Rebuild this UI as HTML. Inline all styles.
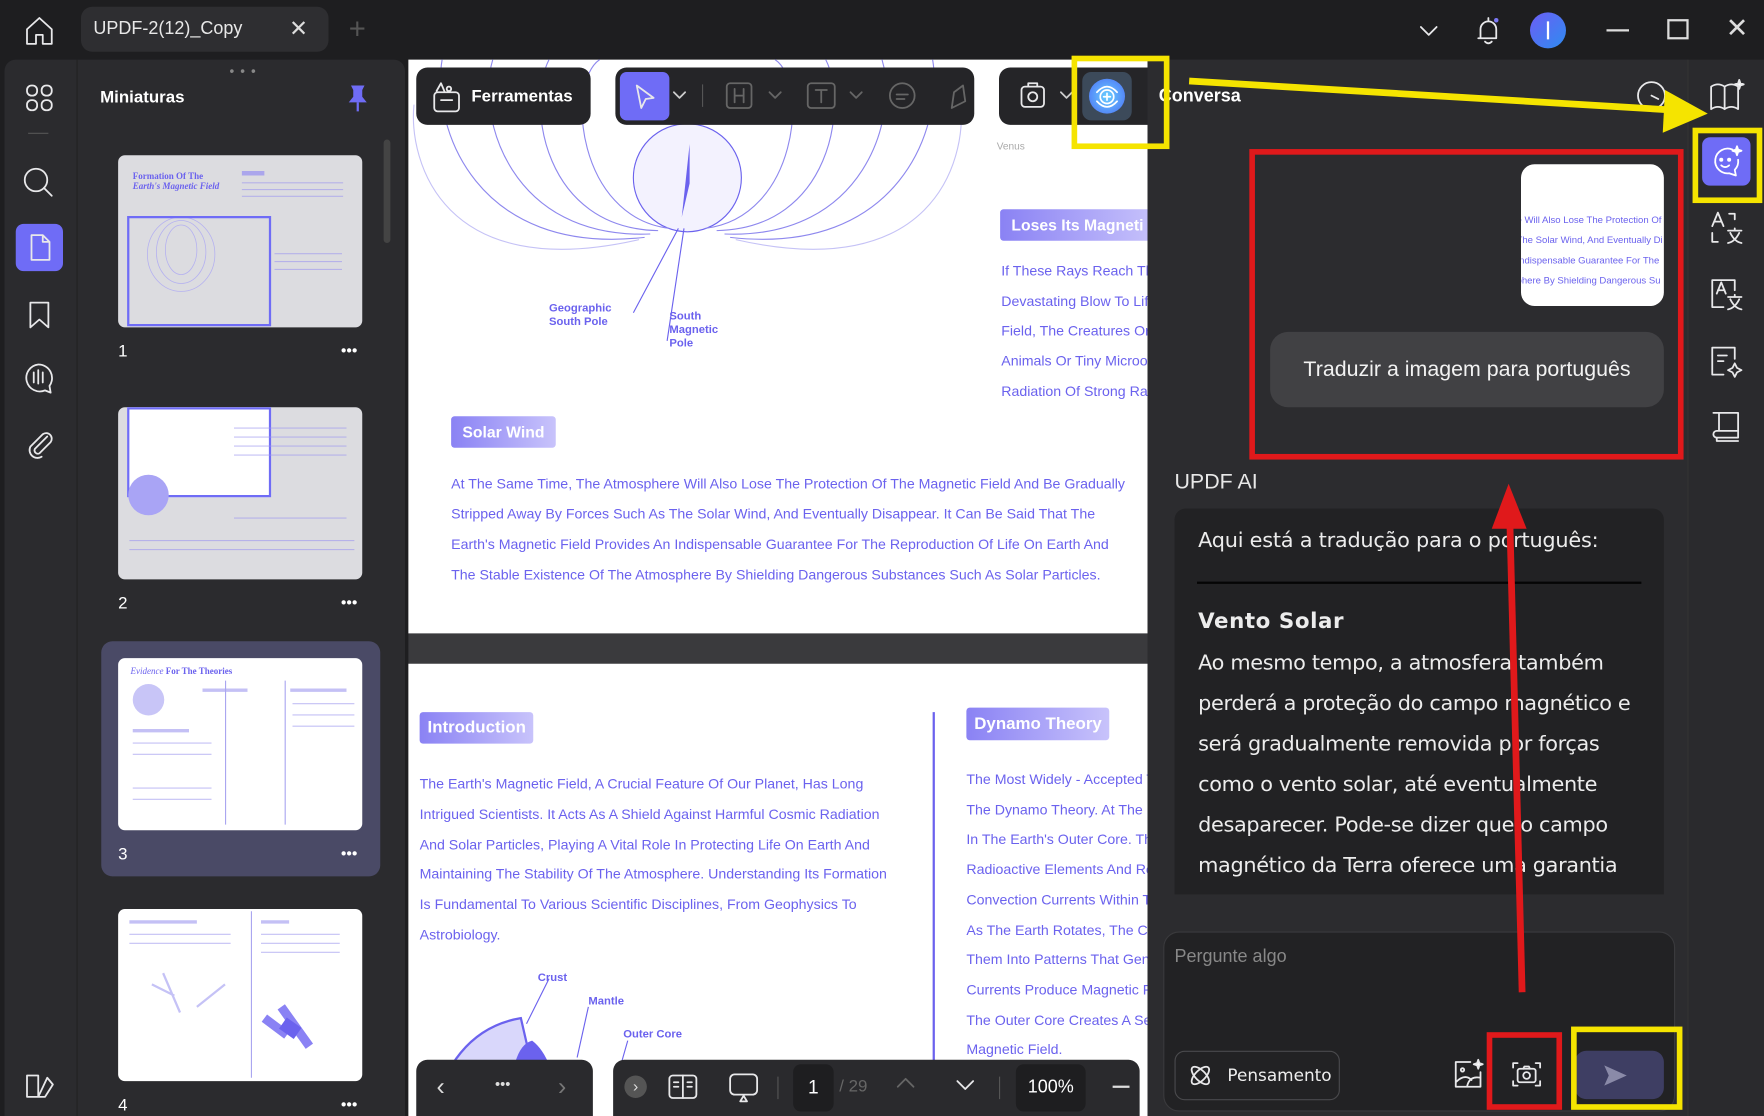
<!DOCTYPE html>
<html><head><meta charset="utf-8"><style>
*{margin:0;padding:0;box-sizing:border-box}
html,body{width:1764px;height:1116px;overflow:hidden;background:#1e1e20;font-family:"Liberation Sans",sans-serif}
#s{position:absolute;left:0;top:0;width:1568px;height:992px;transform:scale(1.125);transform-origin:0 0;background:#1e1e20;overflow:hidden}
.a{position:absolute}
.w{color:#fff}
.doc{color:#6b62ee;font-size:12.6px;white-space:nowrap;font-family:"Liberation Sans",sans-serif}
.badge{position:absolute;color:#fff;font-weight:bold;background:linear-gradient(90deg,#8a82f4,#c8c3fb);border-radius:3px;padding:0 10px}
.thumb{position:absolute;border-radius:6px}
.ln{position:absolute;height:2px;background:#9c96ef;opacity:.6}
.ic{position:absolute;fill:none;stroke:#e8e8ea;stroke-width:1.6;stroke-linecap:round;stroke-linejoin:round}
</style></head><body><div id="s">

<svg class="ic" style="left:20px;top:12px" width="30" height="30" viewBox="0 0 30 30"><path d="M4 14 L15 4 L26 14 V27 H18 V19 H12 V27 H4 Z"/></svg>
<div class="a" style="left:72px;top:6px;width:220px;height:40px;background:#2e2e31;border-radius:10px"></div>
<div class="a w" style="left:83px;top:17px;font-size:16px;color:#e8e8e8">UPDF-2(12)_Copy</div>
<div class="a" style="left:257px;top:13px;font-size:20px;color:#ddd">✕</div>
<div class="a" style="left:310px;top:10px;font-size:26px;color:#555">+</div>
<svg class="ic" style="left:1258px;top:18px" width="24" height="20"><path d="M5 6 L12 13 L19 6"/></svg>
<svg class="ic" style="left:1308px;top:12px" width="30" height="30" viewBox="0 0 30 30"><path d="M8 22 V14 A7 7 0 0 1 22 14 V22 H6 M12 25 Q15 28 18 25 M15 4 V6"/><circle cx="22" cy="6" r="2" fill="#7b78f5" stroke="none"/></svg>
<div class="a" style="left:1360px;top:11px;width:32px;height:32px;border-radius:50%;background:linear-gradient(135deg,#6c5df5,#2e8cf0)"><div style="position:absolute;left:15px;top:8px;width:2px;height:16px;background:#fff"></div></div>
<div class="a" style="left:1428px;top:26px;width:20px;height:2px;background:#ddd"></div>
<div class="a" style="left:1482px;top:17px;width:19px;height:18px;border:2px solid #ddd"></div>
<div class="a" style="left:1534px;top:11px;font-size:24px;color:#ddd">✕</div>

<div class="a" style="left:4px;top:53px;width:356px;height:939px;background:#2b2b2e;border-radius:10px 10px 0 0"></div>
<div class="a" style="left:68px;top:53px;width:1px;height:939px;background:#222"></div>
<svg class="ic" style="left:20px;top:72px" width="30" height="30" viewBox="0 0 30 30"><rect x="4" y="4" width="9" height="9" rx="4"/><rect x="17" y="4" width="9" height="9" rx="4"/><rect x="4" y="17" width="9" height="9" rx="4"/><rect x="17" y="17" width="9" height="9" rx="4"/></svg>
<div class="a" style="left:25px;top:118px;width:18px;height:1px;background:#555"></div>
<svg class="ic" style="left:18px;top:146px" width="32" height="32" viewBox="0 0 32 32"><circle cx="14" cy="14" r="10"/><path d="M21 21 L28 28"/></svg>
<div class="a" style="left:14px;top:199px;width:42px;height:42px;background:#6f6cf6;border-radius:7px"></div>
<svg class="ic" style="left:20px;top:205px" width="30" height="30" viewBox="0 0 30 30"><path d="M8 4 H18 L24 10 V26 H8 Z M18 4 V10 H24"/></svg>
<svg class="ic" style="left:20px;top:265px" width="30" height="30" viewBox="0 0 30 30"><path d="M7 4 H23 V26 L15 19 L7 26 Z"/></svg>
<svg class="ic" style="left:18px;top:320px" width="32" height="32" viewBox="0 0 32 32"><path d="M16 4 A12 12 0 1 0 22 27 L27 29 L26 23 A12 12 0 0 0 16 4 Z M12 11 V20 M16 9 V21 M20 11 V20"/></svg>
<svg class="ic" style="left:20px;top:380px" width="30" height="30" viewBox="0 0 30 30"><path d="M22 8 L11 19 A3 3 0 0 0 15 23 L25 13 A5 5 0 0 0 18 6 L7 17 A7 7 0 0 0 17 26"/></svg>
<svg class="ic" style="left:20px;top:950px" width="30" height="30" viewBox="0 0 30 30"><path d="M4 6 H14 V25 H4 Z M14 25 L22 8 L27 14 L20 25 Z"/></svg>

<div class="a" style="left:204px;top:56px;color:#888;font-size:12px;letter-spacing:1px">• • •</div>
<div class="a w" style="left:89px;top:78px;font-size:15px;font-weight:bold">Miniaturas</div>
<svg class="a" style="left:308px;top:74px" width="20" height="26"><path d="M4 2 H16 L14 6 V12 L18 17 H2 L6 12 V6 Z" fill="#6f6cf6"/><path d="M10 17 V25" stroke="#6f6cf6" stroke-width="2"/></svg>
<div class="a" style="left:341px;top:124px;width:6px;height:92px;background:#444;border-radius:3px"></div>

<div class="thumb" style="left:105px;top:138px;width:217px;height:153px;background:#dcdce0"></div>
<div class="a" style="left:118px;top:152px;font:bold 8px 'Liberation Serif',serif;color:#6b62ee">Formation Of The<br><i>Earth's Magnetic Field</i></div>
<svg class="a" style="left:113px;top:192px" width="128" height="98"><g fill="none" stroke="#b5b1f0" stroke-width=".7"><ellipse cx="48" cy="30" rx="14" ry="22"/><ellipse cx="48" cy="32" rx="22" ry="28"/><ellipse cx="48" cy="34" rx="30" ry="33"/></g></svg>
<div class="a" style="left:113px;top:192px;width:128px;height:98px;border:2px solid #6f6cf6"></div>
<div class="ln" style="left:215px;top:152px;width:20px;background:#8a82f4;height:4px"></div>
<div class="ln" style="left:215px;top:162px;width:90px;height:1px"></div><div class="ln" style="left:215px;top:168px;width:90px;height:1px"></div><div class="ln" style="left:215px;top:174px;width:90px;height:1px"></div>
<div class="ln" style="left:244px;top:225px;width:60px;height:1px"></div><div class="ln" style="left:244px;top:232px;width:60px;height:1px"></div><div class="ln" style="left:244px;top:239px;width:60px;height:1px"></div>
<div class="a w" style="left:105px;top:304px;font-size:15px">1</div><div class="a w" style="left:303px;top:303px;font-size:14px">•••</div>

<div class="thumb" style="left:105px;top:362px;width:217px;height:153px;background:#dcdce0"></div>
<div class="a" style="left:113px;top:362px;width:128px;height:80px;border:2px solid #6f6cf6;background:#fff"></div>
<div class="a" style="left:114px;top:422px;width:36px;height:36px;border-radius:50%;background:#a9a4f5"></div>
<div class="ln" style="left:208px;top:380px;width:100px;height:1px"></div><div class="ln" style="left:208px;top:388px;width:100px;height:1px"></div><div class="ln" style="left:208px;top:396px;width:100px;height:1px"></div><div class="ln" style="left:208px;top:404px;width:100px;height:1px"></div><div class="ln" style="left:208px;top:460px;width:100px;height:1px"></div><div class="ln" style="left:115px;top:480px;width:200px;height:1px"></div><div class="ln" style="left:115px;top:488px;width:200px;height:1px"></div>
<div class="a w" style="left:105px;top:528px;font-size:15px">2</div><div class="a w" style="left:303px;top:527px;font-size:14px">•••</div>

<div class="a" style="left:90px;top:570px;width:248px;height:209px;background:#4a4a66;border-radius:10px"></div>
<div class="thumb" style="left:105px;top:585px;width:217px;height:153px;background:#fff"></div>
<div class="a" style="left:116px;top:592px;font:bold 8px 'Liberation Serif',serif;color:#6b62ee"><i style="font-weight:normal">Evidence</i> For The Theories</div>
<div class="a" style="left:118px;top:608px;width:28px;height:28px;border-radius:50%;background:#c8c5f7"></div>
<div class="ln" style="left:118px;top:648px;width:50px;height:3px"></div><div class="ln" style="left:180px;top:612px;width:40px;height:3px"></div><div class="ln" style="left:258px;top:612px;width:50px;height:3px"></div>
<div class="a" style="left:200px;top:605px;width:1px;height:128px;background:#aaa6f0"></div><div class="a" style="left:253px;top:605px;width:1px;height:128px;background:#aaa6f0"></div>
<div class="ln" style="left:118px;top:660px;width:70px;height:1px"></div><div class="ln" style="left:118px;top:670px;width:70px;height:1px"></div><div class="ln" style="left:118px;top:700px;width:70px;height:1px"></div><div class="ln" style="left:118px;top:710px;width:70px;height:1px"></div>
<div class="ln" style="left:260px;top:625px;width:55px;height:1px"></div><div class="ln" style="left:260px;top:635px;width:55px;height:1px"></div><div class="ln" style="left:260px;top:645px;width:55px;height:1px"></div>
<div class="a w" style="left:105px;top:751px;font-size:15px">3</div><div class="a w" style="left:303px;top:750px;font-size:14px">•••</div>

<div class="thumb" style="left:105px;top:808px;width:217px;height:153px;background:#fff"></div>
<div class="a" style="left:223px;top:810px;width:1px;height:148px;background:#aaa6f0"></div>
<div class="ln" style="left:115px;top:818px;width:60px;height:3px"></div><div class="ln" style="left:232px;top:818px;width:25px;height:3px"></div>
<div class="ln" style="left:115px;top:830px;width:90px;height:1px"></div><div class="ln" style="left:115px;top:838px;width:90px;height:1px"></div><div class="ln" style="left:232px;top:830px;width:70px;height:1px"></div><div class="ln" style="left:232px;top:838px;width:70px;height:1px"></div><div class="ln" style="left:232px;top:846px;width:70px;height:1px"></div>
<svg class="a" style="left:130px;top:860px" width="80" height="50"><path d="M5 15 L25 25 M15 5 L30 40 M45 35 L70 15" stroke="#c5c2f6" stroke-width="2" fill="none"/></svg>
<svg class="a" style="left:230px;top:890px" width="60" height="50"><path d="M5 15 L25 30 M20 5 L45 40" stroke="#8a82f4" stroke-width="8"/><rect x="20" y="18" width="16" height="12" fill="#6b62ee" transform="rotate(35 28 24)"/></svg>
<div class="a w" style="left:105px;top:974px;font-size:15px">4</div><div class="a w" style="left:303px;top:973px;font-size:14px">•••</div>

<div class="a" style="left:363px;top:53px;width:657px;height:939px;background:#3a3a3d"></div>
<div class="a" style="left:363px;top:53px;width:657px;height:510px;background:#fff"></div>
<div class="a" style="left:363px;top:590px;width:657px;height:402px;background:#fff"></div>
<svg class="a" style="left:363px;top:53px" width="657" height="280" viewBox="0 0 657 280">
<g fill="none" stroke="#8e88ee" stroke-width="1">
<circle cx="248" cy="105" r="48" fill="#f3f2fe" stroke="#6b62ee"/>
<path d="M232 150 C150 140 140 20 170 0 M222 152 C120 150 105 40 125 0 M215 155 C90 160 60 50 75 0 M210 158 C60 175 20 60 30 0"/>
<path d="M264 150 C346 140 356 20 326 0 M274 152 C376 150 391 40 371 0 M281 155 C406 160 436 50 421 0 M286 158 C436 175 476 60 466 0"/>
<path d="M205 160 C30 200 0 90 5 40 M291 160 C466 200 496 90 491 40" stroke="#c5c2f6"/>
<path d="M240 150 L200 225 M245 150 L230 250" stroke="#6b62ee"/>
</g>
<path d="M250 75 L243 140 L250 110 Z" fill="#6b62ee"/>
<text x="125" y="224" font-size="10" font-weight="bold" fill="#6b62ee">Geographic</text><text x="125" y="236" font-size="10" font-weight="bold" fill="#6b62ee">South Pole</text>
<text x="232" y="231" font-size="10" font-weight="bold" fill="#6b62ee">South</text><text x="232" y="243" font-size="10" font-weight="bold" fill="#6b62ee">Magnetic</text><text x="232" y="255" font-size="10" font-weight="bold" fill="#6b62ee">Pole</text>
<text x="523" y="80" font-size="9" fill="#aaa">Venus</text>
</svg>
<div class="badge" style="left:889px;top:186px;height:28px;line-height:28px;font-size:14px;width:140px">Loses Its Magneti</div>
<div class="doc a" style="left:890px;top:228px;line-height:26.7px">If These Rays Reach Th<br>Devastating Blow To Lif<br>Field, The Creatures Or<br>Animals Or Tiny Microo<br>Radiation Of Strong Ra</div>
<div class="badge" style="left:401px;top:370px;height:28px;line-height:28px;font-size:14px">Solar Wind</div>
<div class="doc a" style="left:401px;top:417px;line-height:27px">At The Same Time, The Atmosphere Will Also Lose The Protection Of The Magnetic Field And Be Gradually<br>Stripped Away By Forces Such As The Solar Wind, And Eventually Disappear. It Can Be Said That The<br>Earth's Magnetic Field Provides An Indispensable Guarantee For The Reproduction Of Life On Earth And<br>The Stable Existence Of The Atmosphere By Shielding Dangerous Substances Such As Solar Particles.</div>

<div class="badge" style="left:373px;top:633px;height:28px;line-height:28px;font-size:15px;padding:0 7px">Introduction</div>
<div class="doc a" style="left:373px;top:684px;line-height:26.8px">The Earth's Magnetic Field, A Crucial Feature Of Our Planet, Has Long<br>Intrigued Scientists. It Acts As A Shield Against Harmful Cosmic Radiation<br>And Solar Particles, Playing A Vital Role In Protecting Life On Earth And<br>Maintaining The Stability Of The Atmosphere. Understanding Its Formation<br>Is Fundamental To Various Scientific Disciplines, From Geophysics To<br>Astrobiology.</div>
<div class="a" style="left:829px;top:633px;width:2px;height:310px;background:#6b62ee"></div>
<div class="badge" style="left:859px;top:629px;height:29px;line-height:29px;font-size:15px;padding:0 7px">Dynamo Theory</div>
<div class="doc a" style="left:859px;top:680px;line-height:26.7px;width:161px;overflow:hidden">The Most Widely - Accepted T<br>The Dynamo Theory. At The<br>In The Earth's Outer Core. Th<br>Radioactive Elements And Re<br>Convection Currents Within T<br>As The Earth Rotates, The C<br>Them Into Patterns That Gen<br>Currents Produce Magnetic F<br>The Outer Core Creates A Se<br>Magnetic Field.</div>
<svg class="a" style="left:373px;top:860px" width="260" height="132"><path d="M10 132 Q30 55 90 45 L110 132 Z" fill="#d9d7fb" stroke="#6b62ee" stroke-width="2"/><path d="M80 132 Q80 70 100 65 Q120 80 125 132Z" fill="#6b62ee"/><path d="M105 132 Q108 90 130 88 Q150 100 150 132Z" fill="#e6e4fc" stroke="#6b62ee"/><path d="M95 50 L115 10 M140 80 L150 35 M175 100 L185 65" stroke="#6b62ee"/><text x="105" y="12" font-size="10" font-weight="bold" fill="#6b62ee">Crust</text><text x="150" y="33" font-size="10" font-weight="bold" fill="#6b62ee">Mantle</text><text x="181" y="62" font-size="10" font-weight="bold" fill="#6b62ee">Outer Core</text></svg>

<div class="a" style="left:370px;top:60px;width:155px;height:51px;background:#252528;border-radius:10px"></div>
<svg class="ic" style="left:383px;top:71px" width="28" height="30" viewBox="0 0 28 30"><rect x="3" y="11" width="22" height="17" rx="3"/><path d="M9 18 H19 M5 10 L9 3 L12 10 M16 6 A2 2 0 1 0 16.1 6"/></svg>
<div class="a w" style="left:419px;top:77px;font-size:15px;font-weight:bold">Ferramentas</div>
<div class="a" style="left:547px;top:60px;width:319px;height:51px;background:#252528;border-radius:10px"></div>
<div class="a" style="left:551px;top:64px;width:44px;height:43px;background:#6f6cf6;border-radius:6px"></div>
<svg class="ic" style="left:560px;top:72px" width="26" height="28" viewBox="0 0 26 28"><path d="M6 4 L21 15 L14 16 L10 24 Z"/></svg>
<svg class="ic" style="left:597px;top:80px;stroke:#ccc" width="14" height="10"><path d="M2 2 L7 7 L12 2"/></svg>
<div class="a" style="left:624px;top:75px;width:1px;height:20px;background:#555"></div>
<svg class="ic" style="left:644px;top:72px;stroke:#666" width="26" height="26"><rect x="2" y="2" width="22" height="22" rx="3"/><path d="M9 7 V19 M17 7 V19 M9 13 H17"/></svg>
<svg class="ic" style="left:682px;top:80px;stroke:#666" width="14" height="10"><path d="M2 2 L7 7 L12 2"/></svg>
<svg class="ic" style="left:716px;top:72px;stroke:#666" width="28" height="26"><rect x="2" y="2" width="24" height="22" rx="3"/><path d="M9 8 H19 M14 8 V19"/></svg>
<svg class="ic" style="left:754px;top:80px;stroke:#666" width="14" height="10"><path d="M2 2 L7 7 L12 2"/></svg>
<svg class="ic" style="left:788px;top:72px;stroke:#666" width="28" height="28"><circle cx="14" cy="13" r="11"/><path d="M9 12 H19 M9 16 H16"/></svg>
<svg class="ic" style="left:840px;top:72px;stroke:#666" width="24" height="28"><path d="M6 24 L8 10 L16 4 L18 18 Z"/></svg>
<div class="a" style="left:888px;top:60px;width:132px;height:51px;background:#252528;border-radius:10px 0 0 10px"></div>
<svg class="ic" style="left:904px;top:71px" width="28" height="28" viewBox="0 0 28 28"><rect x="4" y="6" width="20" height="18" rx="3"/><circle cx="14" cy="15" r="4"/><path d="M10 6 V3 H18 V6"/></svg>
<svg class="ic" style="left:941px;top:80px;stroke:#ccc" width="14" height="10"><path d="M2 2 L7 7 L12 2"/></svg>
<div class="a" style="left:962px;top:64px;width:44px;height:43px;background:#3c4a5a;border-radius:8px"></div>
<div class="a" style="left:968px;top:70px;width:32px;height:31px;border-radius:50%;background:radial-gradient(circle,#6ad0ff,#4b6bf5)"></div>
<svg class="ic" style="left:970px;top:72px;stroke:#fff;stroke-width:1.5" width="28" height="28"><circle cx="14" cy="14" r="6"/><path d="M14 11 V17 M11 14 H17 M5 10 Q14 0 23 10 M23 18 Q14 28 5 18"/></svg>

<div class="a" style="left:370px;top:942px;width:157px;height:50px;background:#2a2a2d;border-radius:10px 10px 0 0"></div>
<div class="a" style="left:388px;top:953px;font-size:22px;color:#ddd">‹</div>
<div class="a" style="left:440px;top:956px;font-size:13px;color:#ddd">•••</div>
<div class="a" style="left:496px;top:953px;font-size:22px;color:#777">›</div>
<div class="a" style="left:545px;top:942px;width:468px;height:50px;background:#2a2a2d;border-radius:10px 10px 0 0"></div>
<div class="a" style="left:555px;top:956px;width:20px;height:20px;border-radius:50%;background:#555;color:#ddd;font-size:14px;text-align:center;line-height:19px">›</div>
<svg class="ic" style="left:593px;top:953px" width="28" height="26"><rect x="2" y="3" width="24" height="20" rx="3"/><path d="M14 3 V23 M6 9 H10 M6 13 H10 M18 9 H22 M18 13 H22"/></svg>
<svg class="ic" style="left:646px;top:952px" width="30" height="30"><rect x="3" y="3" width="24" height="18" rx="4"/><path d="M12 27 L15 22 L18 27 Z"/></svg>
<div class="a" style="left:691px;top:957px;width:1px;height:20px;background:#555"></div>
<div class="a" style="left:705px;top:946px;width:36px;height:42px;background:#1e1e20;border-radius:7px;color:#fff;font-size:17px;text-align:center;line-height:42px">1</div>
<div class="a" style="left:746px;top:957px;font-size:15px;color:#666">/ 29</div>
<svg class="ic" style="left:795px;top:956px;stroke:#666" width="20" height="14"><path d="M3 10 L10 3 L17 10"/></svg>
<svg class="ic" style="left:848px;top:958px" width="20" height="14"><path d="M3 3 L10 10 L17 3"/></svg>
<div class="a" style="left:888px;top:957px;width:1px;height:20px;background:#555"></div>
<div class="a" style="left:903px;top:946px;width:62px;height:42px;background:#1e1e20;border-radius:7px;color:#fff;font-size:16px;text-align:center;line-height:42px">100%</div>
<div class="a" style="left:989px;top:965px;width:15px;height:2px;background:#ddd"></div>

<div class="a" style="left:1020px;top:53px;width:480px;height:939px;background:#2c2c2f"></div>
<div class="a" style="left:1500px;top:53px;width:68px;height:939px;background:#2a2a2d;border-left:1px solid #333"></div>
<div class="a w" style="left:1030px;top:77px;font-size:16px;font-weight:bold">Conversa</div>
<svg class="ic" style="left:1453px;top:70px" width="30" height="30"><circle cx="15" cy="15" r="12"/><path d="M15 15 L21 18"/></svg>
<svg class="ic" style="left:1518px;top:70px" width="34" height="30" viewBox="0 0 34 30"><path d="M3 7 Q9 3 15 7 V27 Q9 23 3 27 Z M15 7 Q21 3 27 7 V27 Q21 23 15 27"/><path d="M28 1 L29 4 L32 5 L29 6 L28 9 L27 6 L24 5 L27 4 Z" fill="#fff"/></svg>
<div class="a" style="left:1513px;top:122px;width:43px;height:43px;background:#6f6cf6;border-radius:7px"></div>
<svg class="ic" style="left:1518px;top:127px;stroke:#fff" width="33" height="33" viewBox="0 0 33 33"><path d="M22 6 A11 11 0 1 0 19 27 L25 29 L24 24 A11 11 0 0 0 27 15"/><circle cx="12" cy="15" r="1" fill="#fff"/><circle cx="19" cy="15" r="1" fill="#fff"/><path d="M12 20 Q15.5 23 19 20"/><path d="M26 3 L27 6 L30 7 L27 8 L26 11 L25 8 L22 7 L25 6 Z" fill="#fff"/></svg>
<svg class="ic" style="left:1518px;top:187px" width="32" height="32" viewBox="0 0 32 32"><path d="M4 14 L9 2 L14 14 M6 10 H12 M19 3 H24 V8 M4 20 V28 H9 M18 18 H30 M24 16 V18 M20 20 Q24 28 30 29 M28 20 Q24 28 18 29"/></svg>
<svg class="ic" style="left:1518px;top:245px" width="32" height="32" viewBox="0 0 32 32"><path d="M14 28 H4 V4 H24 V13"/><path d="M8 16 L12 6 L16 16 M9 13 H15 M18 19 H30 M24 17 V19 M20 21 Q24 29 30 30 M28 21 Q24 29 18 30"/></svg>
<svg class="ic" style="left:1518px;top:305px" width="32" height="32" viewBox="0 0 32 32"><path d="M14 28 H4 V4 H24 V14 M9 11 H17 M9 16 H14"/><path d="M24 18 L26 22 L30 24 L26 26 L24 30 L22 26 L18 24 L22 22 Z"/></svg>
<svg class="ic" style="left:1518px;top:363px" width="32" height="32" viewBox="0 0 32 32"><path d="M5 4 H27 V26 H8 A3 3 0 0 1 8 20 H27 M10 4 V20 M8 26 V29 H27"/></svg>

<div class="a" style="left:1352px;top:146px;width:127px;height:126px;background:#fff;border-radius:12px;overflow:hidden">
<div class="doc" style="font-size:8.5px;line-height:18px;position:absolute;left:-4px;top:40px">e Will Also Lose The Protection Of<br>The Solar Wind, And Eventually Di<br>Indispensable Guarantee For The<br>phere By Shielding Dangerous Su</div></div>
<div class="a" style="left:1129px;top:295px;width:350px;height:67px;background:#414144;border-radius:16px;color:#f2f2f2;font-size:19px;line-height:67px;text-align:center;font-family:'Liberation Sans','DejaVu Sans',sans-serif">Traduzir a imagem para português</div>

<div class="a" style="left:1044px;top:418px;font-size:19px;color:#e8e8e8">UPDF AI</div>
<div class="a" style="left:1044px;top:452px;width:435px;height:343px;background:#222224;border-radius:10px 10px 0 0;overflow:hidden">
<div style="position:absolute;left:21px;top:18px;font-size:18.5px;color:#ececec;font-family:'DejaVu Sans',sans-serif;letter-spacing:-.2px">Aqui está a tradução para o português:</div>
<div style="position:absolute;left:20px;top:65px;width:395px;height:2px;background:#050505"></div>
<div style="position:absolute;left:21px;top:89px;font-size:19px;font-weight:bold;color:#ececec;font-family:'DejaVu Sans',sans-serif;letter-spacing:.5px">Vento Solar</div>
<div style="position:absolute;left:21px;top:120px;width:420px;font-size:18.5px;line-height:36px;color:#ececec;font-family:'DejaVu Sans',sans-serif;white-space:nowrap;letter-spacing:-.3px">Ao mesmo tempo, a atmosfera também<br>perderá a proteção do campo magnético e<br>será gradualmente removida por forças<br>como o vento solar, até eventualmente<br>desaparecer. Pode-se dizer que o campo<br>magnético da Terra oferece uma garantia</div>
</div>

<div class="a" style="left:1034px;top:828px;width:455px;height:160px;background:#222224;border:1px solid #3a3a3d;border-radius:14px"></div>
<div class="a" style="left:1044px;top:842px;font-size:16px;color:#888">Pergunte algo</div>
<div class="a" style="left:1044px;top:934px;width:147px;height:44px;border:1px solid #4a4a4d;border-radius:9px"></div>
<svg class="ic" style="left:1055px;top:944px" width="24" height="24" viewBox="0 0 24 24"><ellipse cx="12" cy="12" rx="10" ry="4.5" transform="rotate(45 12 12)"/><ellipse cx="12" cy="12" rx="10" ry="4.5" transform="rotate(-45 12 12)"/></svg>
<div class="a w" style="left:1091px;top:947px;font-size:15px;color:#eee;font-family:'DejaVu Sans',sans-serif">Pensamento</div>
<svg class="ic" style="left:1290px;top:940px" width="30" height="30" viewBox="0 0 30 30"><path d="M17 4 H4 V26 H26 V13 M4 22 Q12 14 18 20 M14 26 Q16 16 26 18"/><circle cx="10" cy="11" r="1.5"/><path d="M24 2 L25 5 L28 6 L25 7 L24 10 L23 7 L20 6 L23 5 Z" fill="#fff"/></svg>
<svg class="ic" style="left:1342px;top:940px" width="30" height="30" viewBox="0 0 30 30"><path d="M3 9 V5 H7 M23 5 H27 V9 M27 21 V25 H23 M7 25 H3 V21"/><rect x="7" y="10" width="16" height="12" rx="2"/><circle cx="15" cy="16" r="3"/><path d="M12 10 L13 8 H17 L18 10"/></svg>
<div class="a" style="left:1400px;top:934px;width:79px;height:43px;background:#3e3e63;border-radius:10px"></div>
<svg class="a" style="left:1424px;top:945px" width="24" height="22"><path d="M2 2 L22 11 L2 20 L6 11 Z" fill="#8a8aa8"/></svg>

<svg class="a" style="left:0;top:0" width="1568" height="992">
<g fill="none" stroke-width="5">
<rect x="955" y="52" width="82" height="78" stroke="#f5e400"/>
<rect x="1507" y="116" width="57" height="62" stroke="#f5e400"/>
<rect x="1113" y="135" width="381" height="271" stroke="#e0191b"/>
<rect x="1324" y="920" width="62" height="64" stroke="#e0191b"/>
<rect x="1399" y="915" width="94" height="69" stroke="#f5e400"/>
<path d="M1057 72 L1490 98" stroke="#f5e400" stroke-width="6"/>
<path d="M1353 882 L1342 460" stroke="#e0191b" stroke-width="6"/>
</g>
<path d="M1480 80 L1518 101 L1478 118 Z" fill="#f5e400"/>
<path d="M1341 430 L1326 470 L1357 470 Z" fill="#e0191b"/>
</svg>
</div></body></html>
